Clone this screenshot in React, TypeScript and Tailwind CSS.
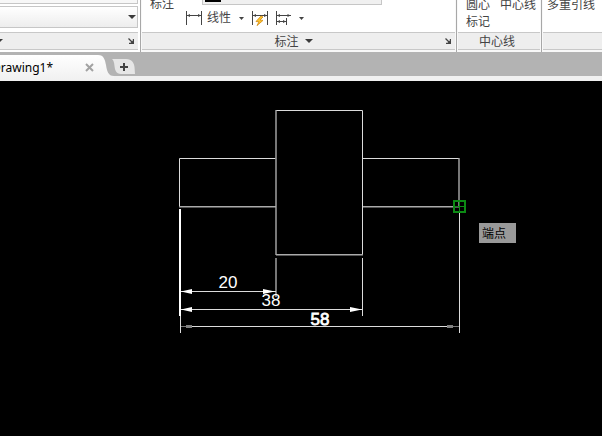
import type { ReactNode } from "react";

function Caret({ small }: { small?: boolean }) {
  return small ? (
    <svg width="5" height="3" viewBox="0 0 5 3" fill="#444" aria-hidden="true">
      <path d="M0 0h5L2.5 3z" />
    </svg>
  ) : (
    <svg width="8" height="4" viewBox="0 0 8 4" fill="#3a3a3a" aria-hidden="true">
      <path d="M0 0h8L4 4z" />
    </svg>
  );
}

function Launcher() {
  return (
    <button type="button" aria-label="Open dialog" className="shrink-0">
      <svg width="6" height="6" viewBox="0 0 6 6" fill="none" stroke="#444" aria-hidden="true">
        <path d="M0.5 0.5l4 4" strokeWidth="1.2" />
        <path d="M5.4 1v4.4H1" strokeWidth="1.2" />
        <path d="M2.5 5h2.5V2.5z" fill="#444" stroke="none" />
      </svg>
    </button>
  );
}

function LinearIcon() {
  return (
    <svg width="16" height="14" viewBox="0 0 16 14" fill="none" stroke="#444" aria-hidden="true">
      <path d="M0.5 0v14M15.5 0v14M1 4.5h14" />
      <path d="M1 4.5l3-1.5v3zM15 4.5l-3-1.5v3z" fill="#444" stroke="none" />
    </svg>
  );
}

function QuickIcon() {
  return (
    <svg width="16" height="16" viewBox="0 0 16 16" fill="none" stroke="#444" aria-hidden="true">
      <path d="M0.5 1v14M15.5 1v14M1 5.5h14" />
      <path d="M1 5.5l3-1.5v3zM15 5.5l-3-1.5v3z" fill="#444" stroke="none" />
      <path d="M9 6L4 11.500l3 .3L5 15.600l6-5.200-3-.4L11 7z" fill="#ffc62e" stroke="#d28a12" strokeWidth="0.8" />
    </svg>
  );
}

function BaselineIcon() {
  return (
    <svg width="16" height="14" viewBox="0 0 16 14" fill="none" stroke="#444" aria-hidden="true">
      <path d="M0.5 0v14M10.5 7v7M1 4.5h14M1 10.5h9" />
      <path d="M1 4.5l3-1.5v3zM14.500 4.500l-3-1.500v3zM1 10.500l3-1.500v3zM10 10.500l-3-1.500v3z" fill="#444" stroke="none" />
    </svg>
  );
}

type PanelProps = {
  className: string;
  title?: string;
  caret?: boolean;
  launcher?: boolean;
  children: ReactNode;
};

function Panel({ className, title, caret, launcher, children }: PanelProps) {
  return (
    <section className={`flex flex-col ${className}`}>
      <div className="flex h-8 flex-col justify-end overflow-hidden bg-white">{children}</div>
      <div className="flex h-[18px] items-center border-y border-[#c8c8c8] bg-[#eeeeee] pr-1">
        <div className="flex flex-1 items-center justify-center gap-[6px]">
          {title && <h2 className="pt-[2px] leading-4">{title}</h2>}
          {caret && <Caret />}
        </div>
        {launcher && <Launcher />}
      </div>
    </section>
  );
}

function Ribbon() {
  return (
    <div className="flex h-[52px] overflow-hidden bg-[#f8f8f8]">
      <section className="flex w-[141px] shrink-0 flex-col border-r border-[#a8a8a8] bg-white pr-[2px]">
        <div className="flex h-8 flex-col justify-end gap-[2px] overflow-hidden pb-1">
          <div className="h-5 shrink-0 border border-l-0 border-[#c6c6c6] bg-[#f7f7f7]" />
          <div className="relative h-[22px] shrink-0">
            <select
              aria-label="Text style"
              className="h-full w-full appearance-none border border-l-0 border-[#c6c6c6] bg-linear-to-b from-white to-[#ededed]"
            />
            <span className="pointer-events-none absolute top-[9px] right-[2px]">
              <Caret />
            </span>
          </div>
        </div>
        <div className="flex h-[18px] items-center justify-between border-y border-[#c8c8c8] bg-[#eeeeee] pr-1">
          <div className="-ml-[5px]">
            <Caret />
          </div>
          <Launcher />
        </div>
      </section>

      <Panel className="min-w-0 flex-1 border-r border-[#a8a8a8] pr-px pl-px" title="标注" caret launcher>
        <div className="flex items-end">
          <button type="button" className="mb-5 w-11 shrink-0 px-2 text-left leading-4">
            标注
          </button>
          <div className="flex flex-1 flex-col gap-[5px] pb-[6px]">
            <div className="ml-4 flex h-5 w-[180px] items-end border border-[#c6c6c6] bg-[#f0f0f0] px-[2px] pb-[2px]">
              <span className="h-4 w-4 bg-black" />
            </div>
            <div className="flex h-4 items-center">
              <button type="button" className="flex items-center gap-[5px] leading-4">
                <LinearIcon />
                线性
              </button>
              <button type="button" aria-label="线性 options" className="ml-[8px]">
                <Caret small />
              </button>
              <button type="button" aria-label="Quick dimension" className="ml-[8px]">
                <QuickIcon />
              </button>
              <button type="button" aria-label="Baseline dimension" className="ml-[8px]">
                <BaselineIcon />
              </button>
              <button type="button" aria-label="Baseline options" className="ml-[7px]">
                <Caret small />
              </button>
            </div>
          </div>
        </div>
      </Panel>

      <Panel className="w-[85px] shrink-0 border-r border-[#a8a8a8] pr-px pl-px" title="中心线">
        <div className="flex items-start justify-between pr-1 pb-[2px] pl-2">
          <button type="button" className="text-left leading-[17px]">
            圆心
            <br />
            标记
          </button>
          <button type="button" className="leading-[17px]">中心线</button>
        </div>
      </Panel>

      <Panel className="w-[60px] shrink-0 pl-px">
        <button type="button" className="mb-[19px] shrink-0 pl-1 text-left leading-[17px] whitespace-nowrap">
          多重引线
        </button>
      </Panel>
    </div>
  );
}

function DocumentTabs() {
  return (
    <div className="flex h-[29px] items-end border-b-[5px] border-[#f0f0f0] bg-[#b3b3b3]">
      <div className="-mb-[5px] flex h-[26px] w-[98px] shrink-0 items-center justify-between bg-linear-to-b from-white to-[#f0f0f0]">
        <a href="#drawing" className="-ml-2 text-black">
          Drawing1*
        </a>
        <button type="button" aria-label="Close Drawing1" className="mr-1 mb-[2px]">
          <svg width="9" height="9" viewBox="0 0 9 9" fill="none" stroke="#a2a2a2" strokeWidth="2" aria-hidden="true">
            <path d="M1 1l7 7M8 1L1 8" />
          </svg>
        </button>
      </div>
      <svg width="16" height="26" viewBox="0 0 16 26" className="-mb-[5px] shrink-0" aria-hidden="true">
        <defs>
          <linearGradient id="tab" x1="0" y1="0" x2="0" y2="1">
            <stop offset="0" stopColor="#fff" />
            <stop offset="1" stopColor="#f0f0f0" />
          </linearGradient>
        </defs>
        <path d="M0 0C6 0 7 5 8 10C9 16 10 21 16 21V26H0z" fill="url(#tab)" />
      </svg>
      <button type="button" aria-label="New drawing" className="-ml-[2px] mb-[2px]">
        <svg width="24" height="15" viewBox="0 0 24 15" aria-hidden="true">
          <path d="M0 0H14C20 0 22 4 22.500 8L23 15H9C4 15 3 11 2.500 7C2 3 1.500 1 0 0z" fill="#e6e6e6" />
          <path d="M12 4v8M8 8h8" stroke="#444" strokeWidth="2" />
        </svg>
      </button>
    </div>
  );
}

function Drawing() {
  return (
    <main id="drawing" className="relative flex-1 overflow-hidden bg-black">
      <svg width="602" height="355" viewBox="0 81 602 355" fill="none" stroke="#dcdcdc" role="img" aria-label="Stepped shaft">
        {/* shaft outline */}
        <path d="M179.500 158.500H275.500M179.500 158.500V206.500M362.500 158.500H459M276 110.500H362.500V254.500" />
        <path d="M276 110V255M179 206.800H276M276 254.800H363M363 206.800H459M459 158V207" stroke="#aaa" strokeWidth="1.4" />

        {/* extension lines */}
        <path d="M180 209V316" stroke="#fff" strokeWidth="2" />
        <path d="M180.500 316V333M362.500 258V316M459.500 207V333" />
        <path d="M276 258V297" stroke="#aaa" strokeWidth="1.4" />

        {/* dimension lines */}
        <path d="M181 291.500H276M181 309.500H362M192 326.500H447" />
        <path d="M181 326.500H192M447 326.500H459" stroke="#777" />
        <path
          d="M181 291.500l11-2.500v5zM275 291.500l-12-2.500v5zM181 309.500l11-2.500v5zM362 309.500l-12-2.500v5z"
          fill="#fff"
          stroke="none"
        />
        <path d="M186 325h6v3h-6zM447 325h6v3h-6z" fill="#808080" stroke="none" />

        <g fill="#fff" stroke="none" fontFamily="'Liberation Sans', Arial, sans-serif" fontSize="17" textAnchor="middle">
          <text x="228" y="288">20</text>
          <text x="271" y="306">38</text>
          <text x="320" y="325" stroke="#fff" strokeWidth="0.8">58</text>
        </g>

        {/* endpoint snap marker */}
        <path d="M454 201h11v11h-11z" stroke="#0c8a14" strokeWidth="2" />
        <path d="M455 206.500h9M459.500 202v9" stroke="#0c8a14" />
      </svg>
      <div role="tooltip" className="absolute top-[142px] left-[479px] h-5 w-[37px] bg-[#999] pt-px pl-[3px] leading-5 text-black">
        端点
      </div>
    </main>
  );
}

export default function App() {
  return (
    <div className="flex min-h-screen flex-col overflow-hidden font-['Noto_Sans','Noto_Sans_CJK_SC',sans-serif] text-[12px] text-[#444]">
      <Ribbon />
      <DocumentTabs />
      <Drawing />
    </div>
  );
}
